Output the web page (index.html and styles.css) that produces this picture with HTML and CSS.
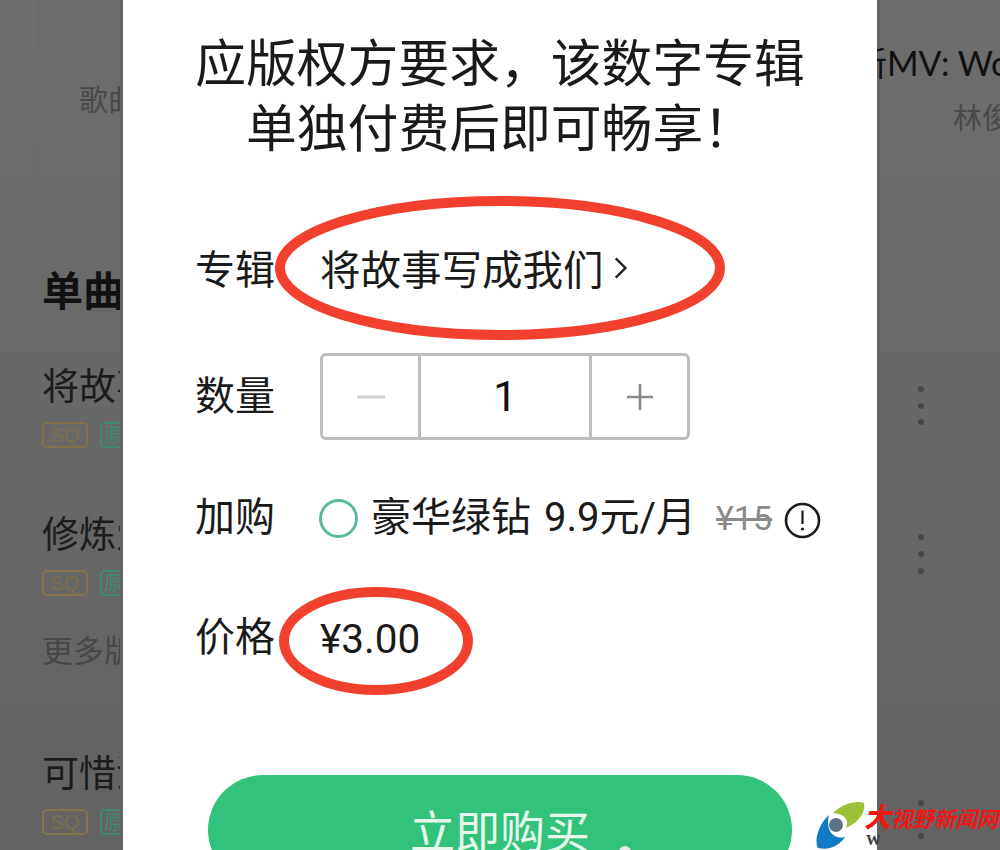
FILE: index.html
```html
<!DOCTYPE html>
<html lang="zh-CN">
<head>
<meta charset="utf-8">
<title>付费专辑</title>
<link rel="stylesheet" href="styles.css">
</head>
<body>
<div class="page">
  <aside class="side side-left">
    <div class="card-left"><span class="card-sub">歌曲</span></div>
    <h2 class="section-title">单曲</h2>
    <div class="song song-1"><div class="song-name">将故事</div><div class="tags"><span class="tag tag-sq">SQ</span><span class="tag tag-orig">原</span></div></div>
    <div class="song song-2"><div class="song-name">修炼爱</div><div class="tags"><span class="tag tag-sq">SQ</span><span class="tag tag-orig">原</span></div></div>
    <div class="more">更多版本</div>
    <div class="song song-3"><div class="song-name">可惜没</div><div class="tags"><span class="tag tag-sq">SQ</span><span class="tag tag-orig">原</span></div></div>
  </aside>

  <main class="modal">
    <h1 class="title">应版权方要求，该数字专辑<br>单独付费后即可畅享！</h1>

    <div class="row row-album">
      <span class="label">专辑</span>
      <span class="value">将故事写成我们</span>
      <svg class="chevron" width="16" height="26" viewBox="0 0 16 26"><path d="M2 2 L13 13 L2 24" fill="none" stroke="#222" stroke-width="2.8"/></svg>
    </div>

    <div class="row row-qty">
      <span class="label">数量</span>
      <div class="stepper">
        <div class="step step-dec"><svg width="28" height="28" viewBox="0 0 28 28"><path d="M0 14 H28" stroke="#d4d4d4" stroke-width="3"/></svg></div>
        <div class="step step-num">1</div>
        <div class="step step-inc"><svg width="28" height="28" viewBox="0 0 28 28"><path d="M1 14 H27 M14 1 V27" stroke="#8a8a8a" stroke-width="2.6"/></svg></div>
      </div>
    </div>

    <div class="row row-addon">
      <span class="label">加购</span>
      <span class="radio"></span>
      <span class="addon-text">豪华绿钻 9.9元/月</span>
      <span class="old-price">¥15</span>
      <svg class="info" width="37" height="37" viewBox="0 0 37 37"><circle cx="18.5" cy="18.5" r="16.5" fill="none" stroke="#1a1a1a" stroke-width="2.6"/><path d="M18.5 8.5 V22" stroke="#1a1a1a" stroke-width="2.2"/><circle cx="18.5" cy="27" r="1.6" fill="#1a1a1a"/></svg>
    </div>

    <div class="row row-price">
      <span class="label">价格</span>
      <span class="value">¥3.00</span>
    </div>

    <button class="buy" type="button">立即购买</button>
  </main>

  <aside class="side side-right">
    <div class="right-title">新MV: Wo</div>
    <div class="right-sub">林俊杰</div>
    <div class="dots dots-1"><i></i><i></i><i></i></div>
    <div class="dots dots-2"><i></i><i></i><i></i></div>
    <div class="dots dots-3"><i></i><i></i><i></i></div>
  </aside>

  <svg class="ring ring-album" width="452" height="148" viewBox="0 0 452 148"><ellipse cx="226" cy="74" rx="220" ry="67" fill="none" stroke="#f2402f" stroke-width="10"/></svg>
  <svg class="ring ring-price" width="200" height="114" viewBox="0 0 200 114"><ellipse cx="100" cy="57" rx="92" ry="49" fill="none" stroke="#f2402f" stroke-width="10"/></svg>

  <span class="wm-dot"></span>
  <div class="watermark">
    <svg class="wm-logo" width="50" height="50" viewBox="0 0 50 50">
      <path d="M17 12 C26 2 42 -1 48 2 C50 12 42 22 30 27 C33 20 30 13 17 12Z" fill="#9cc136"/>
      <path d="M13 14 C2 24 -2 40 2 47 C14 50 24 44 29 36 C18 39 9 30 13 14Z" fill="#1279c4"/>
      <circle cx="20" cy="24" r="7" fill="#5f7482"/>
    </svg>
    <span class="wm-w">W</span>
    <span class="wm-text"><b>大</b>视野新闻网</span>
  </div>
</div>
</body>
</html>
```
FILE: styles.css
```css
* { box-sizing: border-box; }
html, body { margin: 0; padding: 0; }
body { font-family: "Noto Sans CJK SC", "Noto Sans", sans-serif; background: #6b6b6b; }
h1, h2 { margin: 0; font-weight: 400; }

.page {
  position: relative;
  display: flex;
  width: 1000px;
  height: 850px;
  overflow: hidden;
  background: linear-gradient(#6d6d6d, #626262);
}

.side { flex: 0 0 123px; width: 123px; overflow: hidden; white-space: nowrap; }

/* left list */
.side-left { padding-left: 42px; }
.card-left {
  width: 200px;
  height: 207px;
  margin: 0 0 0 -4px;
  padding: 78px 0 0 40px;
  border: 1px solid #676767;
  border-top: 0;
  border-radius: 0 0 0 20px;
}
.card-sub { font-size: 29px; line-height: 40px; color: #484848; }
.section-title { margin-top: 56px; font-size: 41px; line-height: 50px; font-weight: 700; color: #111; }
.song-name { font-size: 37px; line-height: 46px; color: #1c1c1c; }
.tags { display: flex; gap: 12px; margin-top: 15px; }
.tag {
  flex: none;
  height: 26px;
  border: 2px solid;
  border-radius: 5px;
  font-size: 20px;
  line-height: 22px;
  text-align: center;
}
.tag-sq { width: 46px; color: #7d6f4c; border-color: #85714a; font-family: "Liberation Sans", sans-serif; }
.tag-orig { width: 40px; padding-left: 2px; text-align: left; color: #3f8a6c; border-color: #3f8a6c; }
.song-1 { margin-top: 48px; }
.song-2 { margin-top: 61px; }
.song-3 { margin-top: 76px; }
.more { margin-top: 30px; font-size: 31px; line-height: 46px; color: #474747; }

/* modal */
.modal {
  flex: 0 0 754px;
  height: 850px;
  padding: 28px 0 0 72px;
  background: #fff;
  color: #1a1a1a;
  overflow: hidden;
  box-shadow: 0 0 0 3px #636363;
}
.title {
  width: 610px;
  font-size: 50.8px;
  line-height: 65px;
  text-align: center;
  color: #1a1a1a;
}
.row { display: flex; align-items: center; font-size: 40px; }
.label { flex: 0 0 125px; width: 125px; font-size: 40px; line-height: 60px; }
.value { font-size: 40.5px; line-height: 60px; }
.row-album { height: 60px; margin-top: 80px; }
.row-album .label { padding-bottom: 3px; }
.chevron { margin-left: 10px; width: 14px; height: 24px; }
.row-qty { height: 87px; margin-top: 55px; }
.row-qty .label { padding-bottom: 7px; }
.row-addon { height: 60px; margin-top: 48px; }
.row-addon .label { padding-bottom: 9px; }
.row-price { height: 60px; margin-top: 57px; }
.row-price .label { padding-bottom: 3px; }
.row-price .value { padding-top: 8px; font-family: Roboto, "Noto Sans CJK SC", sans-serif; font-size: 40.5px; }

.stepper {
  display: flex;
  width: 370px;
  height: 87px;
  border: 3px solid #bdbdbd;
  border-radius: 6px;
}
.step { display: flex; align-items: center; justify-content: center; }
.step-dec { flex: 0 0 95px; }
.step-inc { flex: 0 0 95px; }
.step-num {
  flex: 1;
  border-left: 3px solid #bdbdbd;
  border-right: 3px solid #bdbdbd;
  font-family: Roboto, sans-serif;
  font-size: 42px;
  color: #111;
}

.radio {
  flex: none;
  width: 39px;
  height: 39px;
  margin-left: -1px;
  border: 3px solid #5dbb93;
  border-radius: 50%;
}
.addon-text {
  margin-left: 13px;
  font-family: Roboto, "Noto Sans CJK SC", sans-serif;
  font-size: 40px;
  line-height: 60px;
  word-spacing: 3px;
  white-space: nowrap;
}
.old-price {
  margin-left: 20px;
  font-family: Roboto, sans-serif;
  font-size: 34px;
  color: #8a8a8a;
  text-decoration: line-through;
}
.info { flex: none; margin: 4px 0 0 12px; }

.buy {
  display: block;
  width: 584px;
  height: 110px;
  margin: 110px 0 0 13px;
  padding: 0;
  border: 0;
  border-radius: 56px;
  background: #33c27b;
  color: #e6f8ee;
  font-family: inherit;
  font-size: 45px;
  line-height: 76px;
  text-align: center;
}

/* right list */
.side-right { position: relative; }
.right-title { margin: 37px 0 0 -24px; font-family: Lato, "Noto Sans CJK SC", sans-serif; font-size: 34px; line-height: 52px; color: #111; }
.right-sub { margin: 7px 0 0 76px; font-size: 29px; line-height: 40px; color: #484848; }
.dots { display: flex; flex-direction: column; gap: 10.7px; width: 6px; margin-left: 41px; }
.dots i { display: block; width: 6px; height: 6px; border-radius: 50%; background: #474747; }
.dots-1 { margin-top: 250px; }
.dots-2 { margin-top: 109px; }
.dots-3 { margin-top: 226px; }

/* annotations over the page */
.ring { position: absolute; }
.ring-album { left: 274px; top: 194px; }
.ring-price { left: 276px; top: 584px; }

.wm-dot { position: absolute; left: 619px; top: 846px; width: 12px; height: 12px; border-radius: 50%; background: #e9e9e9; }
.watermark { position: absolute; left: 814px; top: 798px; width: 186px; height: 52px; }
.wm-logo { position: absolute; left: 2px; top: 3px; }
.wm-w { position: absolute; left: 52px; top: 32px; font: 700 15px/20px "Liberation Serif", serif; color: #3c3c3c; }
.wm-text {
  position: absolute;
  left: 50px;
  top: 2px;
  font-size: 21.5px;
  line-height: 32px;
  font-weight: 700;
  font-style: italic;
  color: #ef1616;
  white-space: nowrap;
}
.wm-text b { font-size: 27px; font-weight: 900; }
```
